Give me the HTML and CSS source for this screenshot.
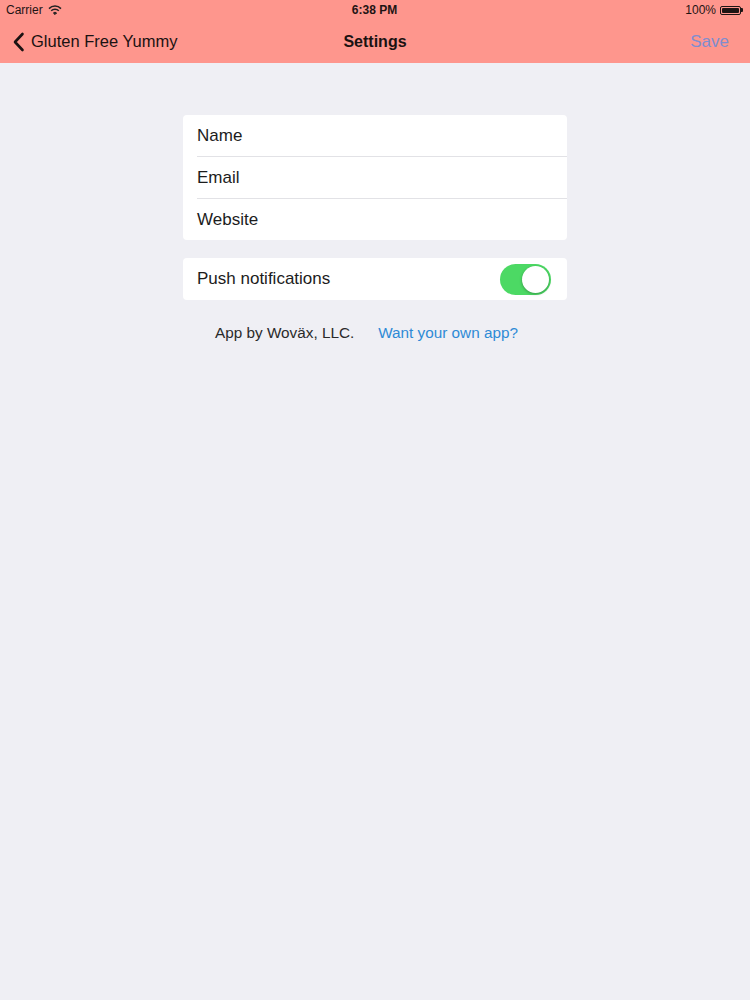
FILE: index.html
```html
<!DOCTYPE html>
<html>
<head>
<meta charset="utf-8">
<link rel="stylesheet" href="styles.css">
</head>
<body>
<header class="top">
  <div class="status">
    <div class="status-left">Carrier
      <svg class="wifi" width="14" height="10" viewBox="0 0 14 10"><path d="M1 3.6 A8.5 8.5 0 0 1 13 3.6" fill="none" stroke="#222" stroke-width="1.5"/><path d="M3.2 5.8 A5.3 5.3 0 0 1 10.8 5.8" fill="none" stroke="#222" stroke-width="1.5"/><path d="M5.4 8 A2.2 2.2 0 0 1 8.6 8 L7 9.6 Z" fill="#222" stroke="#222" stroke-width="1"/></svg>
    </div>
    <div class="status-time">6:38 PM</div>
    <div class="status-right">100%
      <span class="battery"><span class="battery-fill"></span></span><span class="battery-tip"></span>
    </div>
  </div>
  <nav class="nav">
    <div class="back">
      <svg width="13" height="20" viewBox="0 0 13 20"><path d="M10.5 2 L3 10 L10.5 18" fill="none" stroke="#1a1212" stroke-width="2.6" stroke-linecap="round" stroke-linejoin="round"/></svg>
      <span>Gluten Free Yummy</span>
    </div>
    <div class="title">Settings</div>
    <div class="save">Save</div>
  </nav>
</header>
<main class="content">
  <section class="card">
    <div class="row">Name</div>
    <div class="row">Email</div>
    <div class="row">Website</div>
  </section>
  <section class="card">
    <div class="row toggle-row">Push notifications
      <span class="switch"><span class="knob"></span></span>
    </div>
  </section>
  <p class="footer"><span>App by Woväx, LLC.</span><a class="link">Want your own app?</a></p>
</main>
</body>
</html>
```
FILE: styles.css
```css
* { box-sizing: border-box; }
html, body { margin: 0; padding: 0; }
body {
  width: 750px;
  height: 1000px;
  background: #efeff4;
  font-family: "Liberation Sans", Arial, sans-serif;
  color: #1c1c1c;
}
.top {
  background: #fe968d;
  height: 63px;
}
.status {
  height: 20px;
  display: flex;
  align-items: center;
  justify-content: space-between;
  padding: 0 7px 0 6px;
  font-size: 12px;
  color: #1e1414;
}
.status-left { display: flex; align-items: center; gap: 5px; width: 120px; }
.status-time { font-weight: bold; }
.status-right { display: flex; align-items: center; justify-content: flex-end; width: 120px; }
.battery {
  margin-left: 4px;
  width: 21px;
  height: 9px;
  border: 1px solid #1e1414;
  border-radius: 2px;
  padding: 1px;
  display: inline-flex;
}
.battery-fill { flex: 1; background: #1e1414; border-radius: 1px; }
.battery-tip { width: 2px; height: 4px; background: #1e1414; border-radius: 0 1px 1px 0; }
.nav {
  height: 43px;
  display: flex;
  align-items: center;
  justify-content: space-between;
  padding: 0 12px;
  font-size: 16.5px;
}
.back { display: flex; align-items: center; gap: 6px; color: #1a1212; width: 220px; }
.back svg { display: block; }
.title { font-weight: bold; color: #1a1212; font-size: 16px; }
.save { width: 220px; text-align: right; padding-right: 9px; color: #7f8dcf; font-size: 17px; }
.content {
  width: 384px;
  margin: 52px auto 0;
  display: flex;
  flex-direction: column;
  gap: 18px;
}
.card {
  background: #fff;
  border-radius: 4px;
  overflow: hidden;
}
.row {
  height: 42px;
  margin-left: 14px;
  display: flex;
  align-items: center;
  font-size: 17px;
  color: #1c1c1c;
  border-top: 1px solid #e2e2e6;
}
.row:first-child { border-top: none; height: 41px; }
.toggle-row { justify-content: space-between; padding-right: 16px; }
.toggle-row:first-child { height: 42px; }
.switch {
  width: 51px;
  height: 31px;
  border-radius: 16px;
  background: #4cd964;
  position: relative;
}
.knob {
  position: absolute;
  right: 2px;
  top: 2px;
  width: 27px;
  height: 27px;
  border-radius: 50%;
  background: #fff;
  box-shadow: 0 1px 3px rgba(0,0,0,0.3);
}
.footer {
  margin: 6px 0 0;
  padding-right: 17px;
  display: flex;
  justify-content: center;
  gap: 24px;
  font-size: 15.3px;
  color: #2a2a2a;
}
.link { color: #2e8ad6; }
```
